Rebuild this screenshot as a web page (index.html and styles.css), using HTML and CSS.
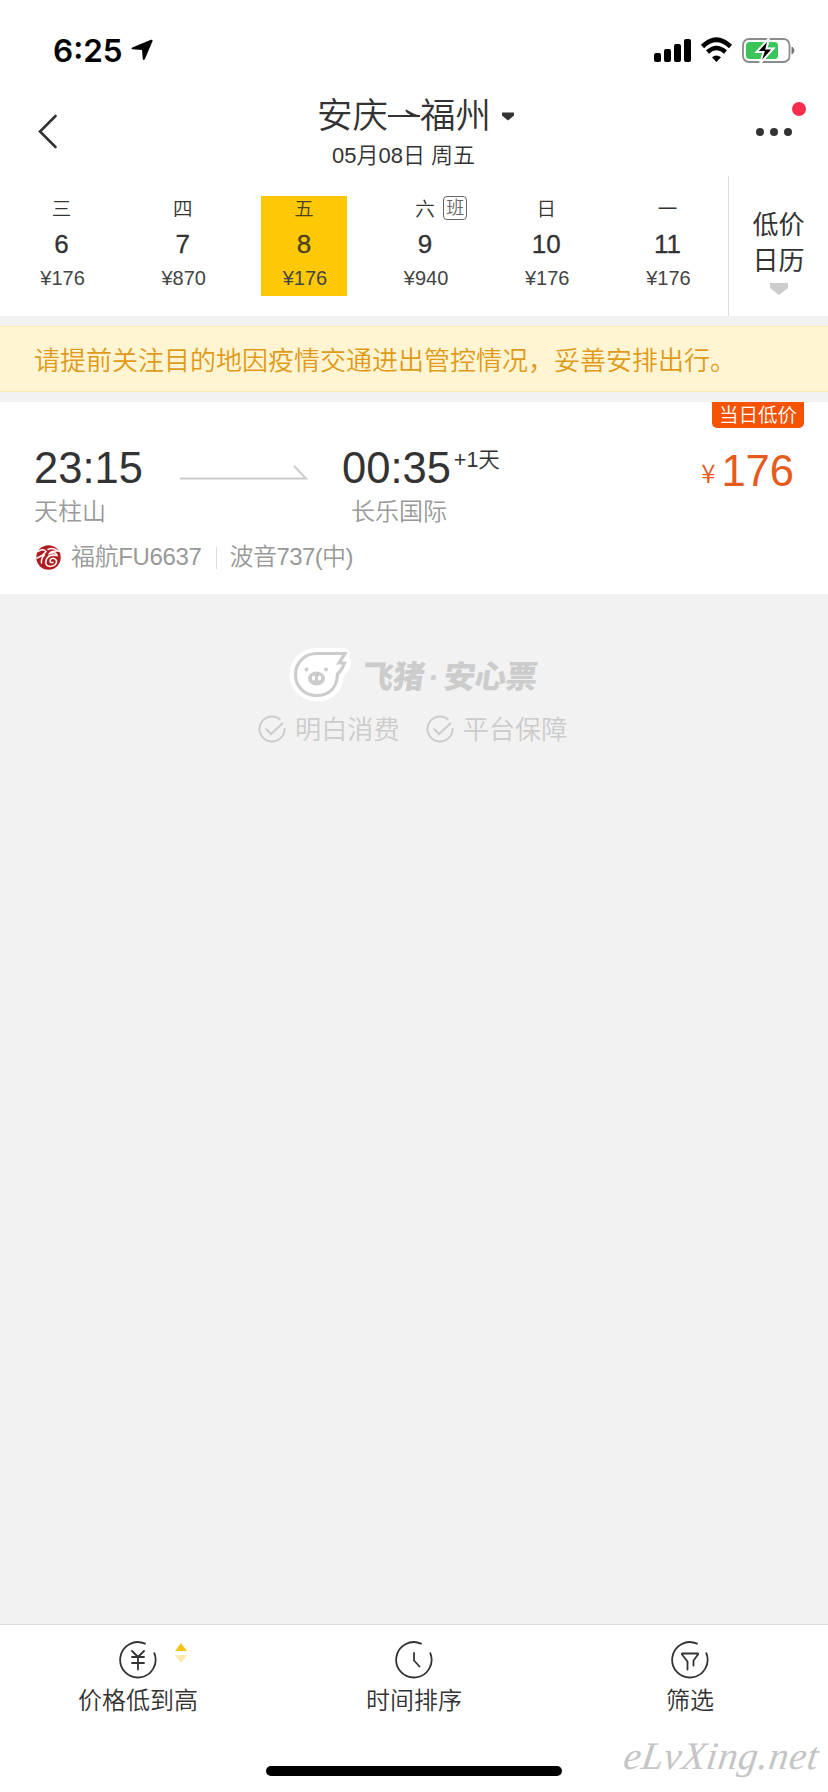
FILE: index.html
```html
<!DOCTYPE html>
<html lang="zh-CN">
<head>
<meta charset="utf-8">
<title>安庆→福州</title>
<link rel="stylesheet" href="styles.css">
</head>
<body>
<div class="app">
  <div class="status">
    <span class="clock">6:25</span>
    <svg class="locate" width="22" height="22" viewBox="0 0 22 22"><path d="M20 .8 1.300 8.500Q-.3 9.500 1.300 10.300L11 11l.8 9q.8 1.800 2 .2L21.600 2Q21.700.4 20 .8Z"/></svg>
    <svg class="signals" width="144" height="28" viewBox="0 0 144 28">
      <rect x="2" y="16" width="7" height="9" rx="2"/><rect x="12" y="12" width="7" height="13" rx="2"/><rect x="22" y="7" width="7" height="18" rx="2"/><rect x="32" y="2" width="7" height="23" rx="2"/>
      <path d="M50.500 9.500Q64.300-4 78.500 9.500" fill="none" stroke="#000" stroke-width="4.600"/>
      <path d="M55.500 15Q64.300 7 73.500 15" fill="none" stroke="#000" stroke-width="4.400"/>
      <path d="M60 20.300Q64.300 16.800 69 20.300L64.400 25Z"/>
      <rect x="91" y="2" width="46.500" height="23" rx="6" fill="#fff" stroke="#8b8b8b" stroke-width="1.800"/>
      <path d="M140 10q4 3.500 0 7Z" fill="#777" stroke="#777"/>
      <rect x="94" y="5" width="32" height="17" rx="3.500" fill="#3cc45a"/>
      <path d="M117 1.500 104.500 15h7l-3.500 11.500L121.500 11.500h-7Z" stroke="#fff" stroke-width="2"/>
    </svg>
  </div>

  <header class="header">
    <svg class="back" width="22" height="40" viewBox="0 0 22 40"><path d="M18.500 4 3 19.500 18.500 35"/></svg>
    <div class="heading">
      <div class="route">
        <span>安庆</span>
        <svg width="32" height="16" viewBox="0 0 32 16"><path d="M0 8H32M18 2Q20 6 30 8" fill="none" stroke="#333" stroke-width="1.800"/><path d="M19 2 30 8H23Z" fill="#333"/></svg>
        <span>福州</span>
        <svg class="caret" width="12" height="9" viewBox="0 0 12 9"><path d="M0 .5H12V3.500L6 8.500 0 3.500Z" fill="#333"/></svg>
      </div>
      <div class="subtitle">05月08日 周五</div>
    </div>
    <svg class="more" width="60" height="44" viewBox="0 0 60 44"><g fill="#333"><circle cx="8" cy="32" r="4"/><circle cx="22" cy="32" r="4"/><circle cx="36" cy="32" r="4"/></g><circle cx="47" cy="9" r="7" fill="#fc2b50"/></svg>
  </header>

  <nav class="dates">
    <div class="days">
      <div class="day"><span class="week">三</span><span class="num">6</span><span class="fare">¥176</span></div>
      <div class="day"><span class="week">四</span><span class="num">7</span><span class="fare">¥870</span></div>
      <div class="day active"><span class="week">五</span><span class="num">8</span><span class="fare">¥176</span></div>
      <div class="day"><span class="week">六<i class="work">班</i></span><span class="num">9</span><span class="fare">¥940</span></div>
      <div class="day"><span class="week">日</span><span class="num">10</span><span class="fare">¥176</span></div>
      <div class="day"><span class="week">一</span><span class="num">11</span><span class="fare">¥176</span></div>
    </div>
    <div class="calendar">
      <span>低价</span><span>日历</span>
      <svg width="18" height="12" viewBox="0 0 18 12"><path d="M0 0H18V5L9 12 0 5Z" fill="#ccc"/></svg>
    </div>
  </nav>

  <div class="notice">请提前关注目的地因疫情交通进出管控情况，妥善安排出行。</div>

  <section class="flight">
    <div class="leg depart"><span class="time">23:15</span><span class="airport">天柱山</span></div>
    <svg class="way" width="130" height="18" viewBox="0 0 130 18"><path d="M0 15.500H126L114 3" fill="none" stroke="#ccc" stroke-width="2"/></svg>
    <div class="leg arrive"><span class="time">00:35<small>+1天</small></span><span class="airport">长乐国际</span></div>
    <div class="cost"><span class="tag">当日低价</span><span class="price"><small>¥</small>176</span></div>
    <div class="carrier">
      <svg width="25" height="25" viewBox="0 0 25 25"><circle cx="12.500" cy="12.500" r="12.200" fill="#b11c20"/><g fill="none" stroke="#fff" stroke-linecap="round"><path d="M2 6.500Q7 3 10 6.500Q7 11 1 13M8.500 10Q5 13 5.500 18" stroke-width="1.500"/><path d="M12 4.500Q17 2 22 6Q15 5.500 13.500 8.500Q20 6 21 10.500Q13 9 10.500 14Q8 21 14 21.500Q21 21 20.500 15.500Q17 11.500 14.500 14.500Q13 18 17 17.500" stroke-width="1.600"/></g></svg>
      <span class="code">福航FU6637</span><span class="plane">波音737(中)</span>
    </div>
  </section>

  <main class="results">
    <div class="brand">
      <svg width="66" height="56" viewBox="0 0 66 56">
        <path d="M29 7H56L53.500 15L57 16Q55 22 50 27Q49 48 29 48.500C16 48.500 7.500 39 7.500 28C7.500 15 17 7 29 7Z" fill="#fff" stroke="#fff" stroke-width="12" stroke-linejoin="round"/>
        <path d="M29 6.500H57L51 16H56.500Q54 23 49.500 27C49 40 42 48.500 28 48.500C16 48.500 7.500 39 7.500 28C7.500 15 17 6.500 29 6.500Z" fill="#fff" stroke="#ccc" stroke-width="3.200"/>
        <g fill="#ccc"><circle cx="18.500" cy="22.500" r="2"/><circle cx="38" cy="22.500" r="2"/><ellipse cx="28.500" cy="31.500" rx="8.500" ry="7"/></g>
        <g fill="#fff"><ellipse cx="25.500" cy="31" rx="1.600" ry="2.500"/><ellipse cx="31.500" cy="31" rx="1.600" ry="2.500"/></g>
      </svg>
      <span class="slogan"><b>飞猪</b><b class="dot">·</b><b>安心票</b></span>
    </div>
    <div class="promises">
      <span><svg width="28" height="28" viewBox="0 0 28 28"><path d="M22.500 4.800A12.500 12.500 0 1 0 26.500 13M7.500 13.500l5.500 5.500L25 8"/></svg>明白消费</span>
      <span><svg width="28" height="28" viewBox="0 0 28 28"><path d="M22.500 4.800A12.500 12.500 0 1 0 26.500 13M7.500 13.500l5.500 5.500L25 8"/></svg>平台保障</span>
    </div>
  </main>

  <footer class="footer">
    <div class="tab">
      <svg class="icon" width="40" height="40" viewBox="0 0 40 40"><path d="M27 3.600A17.700 17.700 0 1 0 36.300 13.200M14 11l6 6 6-6M14 17H26M14 23H26M20 17V29.500"/></svg>
      <svg class="order" width="12" height="20" viewBox="0 0 12 20"><path d="M0 8 6 0l6 8Z" fill="#f5c51c"/><path d="M0 12h12l-6 8Z" fill="#fce9ae"/></svg>
      <span>价格低到高</span>
    </div>
    <div class="tab">
      <svg class="icon" width="40" height="40" viewBox="0 0 40 40"><path d="M27 3.600A17.700 17.700 0 1 0 36.300 13.200M20 13V20.500L25.500 26.500"/></svg>
      <span>时间排序</span>
    </div>
    <div class="tab">
      <svg class="icon" width="40" height="40" viewBox="0 0 40 40"><path d="M27 3.600A17.700 17.700 0 1 0 36.300 13.200M17.500 29.500V21.500L12 14.500Q11.500 13.500 12.500 13.500H27.500Q28.500 13.500 28 14.500L23.500 20.500V25.500"/></svg>
      <span>筛选</span>
    </div>
    <div class="home"></div>
    <div class="mark">eLvXing.net</div>
  </footer>
</div>
</body>
</html>
```
FILE: styles.css
```css
* { box-sizing: border-box; }
body { margin: 0; background: #fff; color: #333; font-family: "Liberation Sans", "Noto Sans CJK SC", sans-serif; font-weight: 350; }
svg { display: block; flex: none; }
.app { width: 828px; height: 1792px; display: flex; flex-direction: column; overflow: hidden; position: relative; }

.status { height: 88px; padding: 13px 32px 0 53px; display: flex; align-items: center; }
.clock { font: 600 31.500px/40px Inter, sans-serif; color: #000; width: 78px; }
.signals { margin-left: auto; }
.locate { margin-top: -2px; }

.header { height: 88px; padding: 0 0 0 37px; display: flex; }
.back { margin-top: 24px; }
.back path { fill: none; stroke: #333; stroke-width: 2.6; stroke-linecap: round; }
.heading { width: 300px; margin-left: 234px; padding: 7px 0 0 24px; }
.route { display: flex; align-items: center; height: 42px; font-size: 35.500px; line-height: 42px; white-space: nowrap; }
.route span { width: 71px; }
.caret { margin-left: 11px; }
.subtitle { margin-top: 6px; padding-left: 15px; font-size: 22px; line-height: 26px; white-space: nowrap; }
.more { margin: 12px 0 0 159px; }

.dates { height: 140px; display: flex; }
.days { width: 729px; padding: 20px 0 0 1px; display: grid; grid-template-columns: repeat(6, 1fr); align-items: start; justify-items: center; border-right: 1px solid #ddd; }
.day { width: 86px; height: 100px; display: flex; flex-direction: column; align-items: center; }
.active { background: #fdc906; color: #4a421b; }
.week { position: relative; font-size: 19.500px; line-height: 26px; }
.work { position: absolute; left: 28px; top: 0; width: 24px; height: 24px; border: 1px solid #666; border-radius: 4px; color: #666; font-size: 18px; line-height: 22px; font-style: normal; text-align: center; }
.num { font-size: 26px; line-height: 30px; margin-top: 7px; -webkit-text-stroke: .3px currentColor; }
.fare { font-size: 20px; line-height: 24px; margin-top: 7px; padding-left: 2px; color: #444; }
.calendar { flex: 1; padding: 31px 0 0; display: flex; flex-direction: column; align-items: center; font-size: 26px; line-height: 36px; font-weight: 400; }
.calendar svg { margin-top: 4px; }

.notice { height: 86px; padding: 1px 0 0 34px; border-top: 10px solid #f2f2f2; border-bottom: 10px solid #f2f2f2; background: #fff5d3; color: #e09a18; font-size: 26px; line-height: 68px; white-space: nowrap; box-shadow: inset 0 1px #faeab2, inset 0 -1px #faeab2; }

.flight { height: 192px; padding: 0 24px 0 34px; display: grid; grid-template-columns: 146px 162px 1fr auto; grid-template-rows: 136px 1fr; }
.leg { padding-top: 41px; display: flex; flex-direction: column; }
.time { font-size: 43.500px; height: 50px; line-height: 50px; white-space: nowrap; }
.time small { font-size: 21.500px; line-height: 20px; margin-left: 3px; vertical-align: 16px; }
.airport { font-size: 24px; line-height: 34px; color: #999; margin-top: 2px; }
.arrive .airport { padding-left: 9px; }
.way { margin-top: 61px; }
.cost { width: 110px; display: flex; flex-direction: column; align-items: flex-end; }
.tag { width: 92px; height: 26px; background: #f75306; color: #fff; border-radius: 0 0 5px 5px; font-size: 19.500px; line-height: 26px; text-align: center; white-space: nowrap; }
.price { margin: 18px 10px 0 0; font-size: 43.500px; line-height: 50px; color: #e65a1c; white-space: nowrap; }
.price small { font-family: "Noto Sans CJK SC", sans-serif; font-size: 26px; line-height: 20px; margin-right: 6px; vertical-align: 3px; }
.carrier { grid-column: 1 / -1; display: flex; align-items: center; height: 38px; padding-left: 2px; font-size: 24px; line-height: 34px; color: #999; letter-spacing: -.35px; }
.code { margin-left: 10px; padding-right: 14px; position: relative; }
.code::after { content: ""; position: absolute; right: -1px; top: 7px; width: 1px; height: 22px; background: #ddd; }
.plane { margin-left: 14px; letter-spacing: -.6px; }

.results { flex: 1; background: #f2f2f2; padding-top: 53px; color: #ccc; }
.brand { display: flex; align-items: center; height: 56px; padding-left: 288px; }
.slogan { display: flex; margin: 4px 0 0 8px; font-size: 31.500px; line-height: 50px; letter-spacing: -.5px; transform: skewX(-8deg); }
.slogan b { font-weight: 900; }
.dot { width: 20px; text-align: center; }
.promises { display: flex; gap: 26px; padding-left: 258px; margin-top: 7px; }
.promises span { display: flex; align-items: center; gap: 9px; font-size: 26.200px; line-height: 40px; }
.promises svg { margin-top: -2px; }
.promises path { fill: none; stroke: #ccc; stroke-width: 2; }

.footer { height: 168px; border-top: 1px solid #ddd; background: #fff; display: grid; grid-template-columns: repeat(3, 1fr); position: relative; }
.tab { display: flex; flex-direction: column; align-items: center; padding-top: 15px; position: relative; font-size: 24px; line-height: 34px; height: 100px; }
.tab span { margin-top: 4px; }
.icon path { fill: none; stroke: #333; stroke-width: 1.800; stroke-linecap: round; stroke-linejoin: round; }
.order { position: absolute; left: 175px; top: 18px; }
.home { position: absolute; left: 266px; top: 141px; width: 296px; height: 10px; border-radius: 5px; background: #000; }
.mark { position: absolute; right: 9px; top: 108px; font: italic 400 39px/46px "Liberation Serif", serif; color: #c5c5c5; letter-spacing: .7px; white-space: nowrap; transform: skewX(-8deg); }
```
